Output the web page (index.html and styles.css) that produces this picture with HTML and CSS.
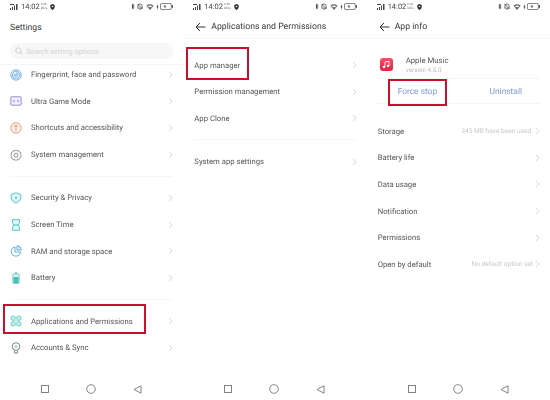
FILE: index.html
```html
<!DOCTYPE html>
<html lang="en">
<head>
<meta charset="utf-8">
<title>Settings</title>
<link rel="stylesheet" href="styles.css">
</head>
<body>
<svg class="defs" width="0" height="0" aria-hidden="true">
  <symbol id="chev" viewBox="0 0 5 8"><path d="M1 1l3 3-3 3" fill="none" stroke="#d0d0d0" stroke-width=".8"/></symbol>
  <symbol id="back" viewBox="0 0 11 10"><path d="M10.500 5H1M5 1L1 5l4 4" fill="none" stroke="#333" stroke-width="1"/></symbol>
  <symbol id="square" viewBox="0 0 8 8"><rect x=".5" y=".5" width="7" height="7" fill="none" stroke="#777" stroke-width=".9"/></symbol>
  <symbol id="circle" viewBox="0 0 10 10"><circle cx="5" cy="5" r="4.300" fill="none" stroke="#777" stroke-width=".9"/></symbol>
  <symbol id="tri" viewBox="0 0 9 9"><path d="M8 .8v7.400L1 4.500z" fill="none" stroke="#777" stroke-width=".9"/></symbol>
  <symbol id="signal" viewBox="0 0 8 7"><path d="M0 5h1v2H0zM2 4h1v3H2zM4 2.500h1V7H4zM6 1h1.500v6H6zM0 1h4v1H0z" fill="#444"/></symbol>
  <symbol id="shield" viewBox="0 0 6 7"><path d="M.3 1L3 0l2.700 1v2.500Q5.500 6 3 7 .5 6 .3 3.500z" fill="#333"/><circle cx="3" cy="3" r=".9" fill="#fff"/></symbol>
  <symbol id="bt" viewBox="0 0 5 8"><path d="M1 2l2.800 3.500L2.200 7V1l1.600 1.500L1 6" fill="none" stroke="#333" stroke-width=".9"/></symbol>
  <symbol id="mute" viewBox="0 0 7 8"><path d="M1 6V3.500Q1 1 3.500 1T6 3.500V6zM.5 1l6 6" fill="none" stroke="#444" stroke-width=".9"/><path d="M3 7h1v1H3z" fill="#444"/></symbol>
  <symbol id="wifi" viewBox="0 0 9 7"><path d="M.3 2Q4.500-1.300 8.700 2L4.500 7z" fill="#666"/><path d="M2 2.600Q4.500 1 7 2.600L6 3.800Q4.500 3 3 3.800z" fill="#fff"/></symbol>
  <symbol id="bolt" viewBox="0 0 3 7"><path d="M2 0L.3 3.800h1L1 7l1.700-4h-1z" fill="#333"/></symbol>
  <symbol id="battery" viewBox="0 0 13 7"><rect x=".4" y=".4" width="11" height="6.200" rx="1.500" fill="none" stroke="#444" stroke-width=".7"/><path d="M12 2.300h1v2.400h-1z" fill="#444"/><path d="M5 5V2L3.800 3.800h2.400" fill="none" stroke="#444" stroke-width=".6"/></symbol>
</svg>

<main class="screens">

  <section class="phone">
    <div class="status">
      <svg class="st-signal"><use href="#signal"/></svg><span class="st-time">14:02</span><span class="st-speed">0.28<br>KB/s</span><svg class="st-shield"><use href="#shield"/></svg>
      <span class="st-right"><svg class="st-bt"><use href="#bt"/></svg><svg class="st-mute"><use href="#mute"/></svg><svg class="st-wifi"><use href="#wifi"/></svg><svg class="st-bolt"><use href="#bolt"/></svg><svg class="st-batt"><use href="#battery"/></svg></span>
    </div>
    <header class="head head-main"><h1 class="title">Settings</h1></header>
    <div class="search-wrap">
      <div class="search">
        <svg class="search-icon" viewBox="0 0 8 8"><circle cx="3.500" cy="3.500" r="2.700" fill="none" stroke="#c4c4c4" stroke-width=".8"/><path d="M5.500 5.500L7.500 7.500" stroke="#c4c4c4" stroke-width=".8"/></svg>
        <span>Search setting options</span>
      </div>
    </div>
    <div class="list list-main">
      <a class="row"><svg class="ico" viewBox="0 0 12 12"><g fill="none" stroke="#4f9de0" stroke-width=".8"><circle cx="6" cy="6" r="5.200"/><circle cx="6" cy="6" r="3.600"/><path d="M6 3.800Q8 4 8 6.500M4 6q0-1 2-.8 1 .2 1 2.800M5.500 8V6.500M4 7.500L4.300 6"/></g></svg><span class="label">Fingerprint, face and password</span><svg class="chev"><use href="#chev"/></svg></a>
      <a class="row"><svg class="ico" viewBox="0 0 12 12"><rect x=".8" y="1.800" width="10.400" height="8.400" rx="1" fill="#f1effc" stroke="#8580dc" stroke-width=".9"/><path d="M3 6h2M4 5v2M7 6h2M8 5v2" stroke="#7a74d6" stroke-width=".6"/></svg><span class="label">Ultra Game Mode</span><svg class="chev"><use href="#chev"/></svg></a>
      <a class="row"><svg class="ico" viewBox="0 0 12 12"><circle cx="6" cy="6" r="5.200" fill="#fdf1ec" stroke="#ee9070" stroke-width=".9"/><path d="M6 9V3.500M4 5l2-2 2 2" fill="none" stroke="#ee9070" stroke-width=".9"/></svg><span class="label">Shortcuts and accessibility</span><svg class="chev"><use href="#chev"/></svg></a>
      <a class="row"><svg class="ico" viewBox="0 0 12 12"><path d="M6 .8l1.200 1 1.600-.2.600 1.500 1.400.7-.3 1.500.7 1L11 7.100l-.3 1.500-1.400.7-.6 1.500-1.600-.2L6 11.600l-1.200-1-1.600.2-.6-1.500-1.400-.7L1.500 7.100.8 6.300l.7-1L1.200 3.800l1.400-.7.600-1.500 1.600.2z" fill="none" stroke="#777" stroke-width=".8"/><circle cx="6" cy="6.200" r="2" fill="none" stroke="#777" stroke-width=".8"/></svg><span class="label">System management</span><svg class="chev"><use href="#chev"/></svg></a>
      <hr class="rule">
      <a class="row"><svg class="ico" viewBox="0 0 12 12"><path d="M6 .8l4.800 1.700v3.500Q10.300 9.500 6 11.200 1.700 9.500 1.200 6V2.500z" fill="#dff5f6" stroke="#45c0c8" stroke-width=".9"/><circle cx="6" cy="5.800" r="1" fill="#45c0c8"/></svg><span class="label">Security &amp; Privacy</span><svg class="chev"><use href="#chev"/></svg></a>
      <a class="row"><svg class="ico" viewBox="0 0 12 12"><path d="M2.500 .7h7v3L7.800 6l1.700 2.300v3h-7v-3L4.200 6 2.500 3.700z" fill="#dff5f6" stroke="#45c0c8" stroke-width=".9"/><path d="M3 6h6" stroke="#45c0c8" stroke-width=".9"/></svg><span class="label">Screen Time</span><svg class="chev"><use href="#chev"/></svg></a>
      <a class="row"><svg class="ico" viewBox="0 0 12 12"><path d="M5 2A4.600 4.600 0 1 0 10.500 7H5z" fill="none" stroke="#4fa8e0" stroke-width=".9"/><path d="M7 .7A4.500 4.500 0 0 1 11.300 5H7z" fill="#e3f2fc" stroke="#4fa8e0" stroke-width=".9"/></svg><span class="label">RAM and storage space</span><svg class="chev"><use href="#chev"/></svg></a>
      <a class="row"><svg class="ico" viewBox="0 0 12 12"><path d="M5 .5h2V2H5z" fill="#45c0b8"/><rect x="2.800" y="2" width="6.400" height="9.500" rx=".8" fill="#dff5f3" stroke="#45c0b8" stroke-width=".7"/><rect x="3.500" y="5" width="5" height="6" fill="#45c0b8"/></svg><span class="label">Battery</span><svg class="chev"><use href="#chev"/></svg></a>
      <hr class="rule">
      <a class="row"><svg class="ico" viewBox="0 0 12 12"><g fill="#c5eeea" stroke="#52c7bd" stroke-width=".8"><rect x="1" y="1" width="4.400" height="4.400" rx="2"/><rect x="6.600" y="1" width="4.400" height="4.400" rx="2"/><rect x="1" y="6.600" width="4.400" height="4.400" rx="2"/><rect x="6.600" y="6.600" width="4.400" height="4.400" rx="2"/></g><rect x="4.500" y="4.500" width="3" height="3" fill="#c5eeea"/></svg><span class="label">Applications and Permissions</span><svg class="chev"><use href="#chev"/></svg></a>
      <a class="row"><svg class="ico" viewBox="0 0 12 12"><circle cx="6" cy="4.500" r="3.800" fill="none" stroke="#777" stroke-width=".9"/><circle cx="6" cy="4.500" r="1.500" fill="#9fd8e0"/><path d="M4.500 8.500v2.500h3V8.500" fill="none" stroke="#777" stroke-width=".9"/></svg><span class="label">Accounts &amp; Sync</span><svg class="chev"><use href="#chev"/></svg></a>
    </div>
    <nav class="nav"><svg class="n-sq"><use href="#square"/></svg><svg class="n-ci"><use href="#circle"/></svg><svg class="n-tr"><use href="#tri"/></svg></nav>
    <div class="mark mark-apps"></div>
  </section>

  <section class="phone">
    <div class="status">
      <svg class="st-signal"><use href="#signal"/></svg><span class="st-time">14:02</span><span class="st-speed">0.28<br>KB/s</span><svg class="st-shield"><use href="#shield"/></svg>
      <span class="st-right"><svg class="st-bt"><use href="#bt"/></svg><svg class="st-mute"><use href="#mute"/></svg><svg class="st-wifi"><use href="#wifi"/></svg><svg class="st-bolt"><use href="#bolt"/></svg><svg class="st-batt"><use href="#battery"/></svg></span>
    </div>
    <header class="head"><svg class="back"><use href="#back"/></svg><h1 class="title">Applications and Permissions</h1></header>
    <div class="list list-sub">
      <a class="row"><span class="label">App manager</span><svg class="chev"><use href="#chev"/></svg></a>
      <a class="row"><span class="label">Permission management</span><svg class="chev"><use href="#chev"/></svg></a>
      <a class="row"><span class="label">App Clone</span><svg class="chev"><use href="#chev"/></svg></a>
      <hr class="rule">
      <a class="row"><span class="label">System app settings</span><svg class="chev"><use href="#chev"/></svg></a>
    </div>
    <nav class="nav"><svg class="n-sq"><use href="#square"/></svg><svg class="n-ci"><use href="#circle"/></svg><svg class="n-tr"><use href="#tri"/></svg></nav>
    <div class="mark mark-manager"></div>
  </section>

  <section class="phone">
    <div class="status">
      <svg class="st-signal"><use href="#signal"/></svg><span class="st-time">14:02</span><span class="st-speed">0.00<br>KB/s</span><svg class="st-shield"><use href="#shield"/></svg>
      <span class="st-right"><svg class="st-bt"><use href="#bt"/></svg><svg class="st-mute"><use href="#mute"/></svg><svg class="st-wifi"><use href="#wifi"/></svg><svg class="st-bolt"><use href="#bolt"/></svg><svg class="st-batt"><use href="#battery"/></svg></span>
    </div>
    <header class="head"><svg class="back"><use href="#back"/></svg><h1 class="title">App info</h1></header>
    <div class="app">
      <svg class="app-icon" viewBox="0 0 13 13"><defs><linearGradient id="pink" x1="0" y1="0" x2="0" y2="1"><stop offset="0" stop-color="#f8506a"/><stop offset="1" stop-color="#e8203f"/></linearGradient></defs><rect width="13" height="13" rx="3" fill="url(#pink)"/><path d="M5 9V4l4-.8v4.800" fill="none" stroke="#fff" stroke-width=".9"/><circle cx="4" cy="9" r="1.200" fill="#fff"/><circle cx="8" cy="8" r="1.200" fill="#fff"/></svg>
      <div class="app-text"><div class="app-name">Apple Music</div><div class="app-ver">version 4.5.0</div></div>
    </div>
    <div class="actions"><span class="act act-stop">Force stop</span><span class="act act-un">Uninstall</span></div>
    <div class="list list-info">
      <a class="row"><span class="label">Storage</span><span class="value">345 MB have been used.</span><svg class="chev"><use href="#chev"/></svg></a>
      <a class="row"><span class="label">Battery life</span><svg class="chev"><use href="#chev"/></svg></a>
      <a class="row"><span class="label">Data usage</span><svg class="chev"><use href="#chev"/></svg></a>
      <a class="row"><span class="label">Notification</span><svg class="chev"><use href="#chev"/></svg></a>
      <a class="row"><span class="label">Permissions</span><svg class="chev"><use href="#chev"/></svg></a>
      <a class="row"><span class="label">Open by default</span><span class="value">No default option set</span><svg class="chev"><use href="#chev"/></svg></a>
    </div>
    <nav class="nav"><svg class="n-sq"><use href="#square"/></svg><svg class="n-ci"><use href="#circle"/></svg><svg class="n-tr"><use href="#tri"/></svg></nav>
    <div class="mark mark-stop"></div>
  </section>

</main>
</body>
</html>
```

FILE: styles.css
```css
* { box-sizing: border-box; }
html, body { margin: 0; padding: 0; background: #fff; }
body { width: 550px; height: 400px; overflow: hidden; font-family: Roboto, "Liberation Sans", sans-serif; color: #555; text-rendering: geometricPrecision; }
.defs { position: absolute; }
.screens { display: flex; width: 550px; height: 400px; }
.phone { position: relative; flex: 0 0 183.33px; height: 400px; display: flex; flex-direction: column; overflow: hidden; filter: blur(.35px); }

.status { position: relative; z-index: 1; flex: 0 0 13px; height: 13px; display: flex; align-items: center; padding: 0 10px; background: #fff; }
.status svg { display: block; }
.st-signal { width: 8px; height: 7px; }
.st-time { margin-left: 3px; font-size: 7.5px; color: #444; }
.st-speed { margin-left: 1px; font-size: 3px; line-height: 3.2px; color: #666; }
.st-shield { width: 5px; height: 6px; margin-left: 3px; }
.st-right { margin-left: auto; display: flex; align-items: center; }
.st-bt { width: 4px; height: 7px; }
.st-mute { width: 6px; height: 7px; margin-left: 2px; }
.st-wifi { width: 8px; height: 6px; margin-left: 3px; }
.st-bolt { width: 3px; height: 6px; margin-left: 2px; }
.st-batt { width: 13px; height: 7px; margin-left: 1px; }

.head { position: relative; z-index: 1; flex: 0 0 26px; height: 26px; display: flex; align-items: center; padding: 2px 0 0 11px; border-bottom: 1px solid #f5f5f5; background: #fff; }
.head-main { flex-basis: 28px; height: 28px; border-bottom: 0; padding: 1px 0 0 10px; }
.title { margin: 0; font-size: 8.7px; font-weight: 400; color: #3a3a3a; }
.back { width: 11px; height: 10px; margin: 0 5px 0 1px; display: block; }

.search-wrap { position: relative; z-index: 1; flex: 0 0 23px; padding: 2px 10px 5px; border-bottom: 1px solid #f5f5f5; background: #fff; }
.search { height: 16px; border-radius: 8px; background: #f7f7f7; display: flex; align-items: center; padding-left: 5px; font-size: 7.3px; color: #d4d4d4; }
.search-icon { width: 8px; height: 8px; margin-right: 3px; }

.list { display: flex; flex-direction: column; }
.list-main { margin-top: -3.7px; }
.list-sub { padding-top: 12.8px; }
.list-info { padding-top: 13.8px; }
.list-sub .row, .list-info .row { padding-left: 11px; }

.row { flex: 0 0 26.67px; height: 26.67px; display: flex; align-items: center; padding: 0 10px; font-size: 7.7px; color: #555; }
.ico { width: 12px; height: 12px; flex: none; margin-right: 9px; }
.label { white-space: nowrap; }
.value { margin-left: auto; font-size: 6.6px; color: #c8c8c8; white-space: nowrap; }
.chev { width: 5px; height: 8px; flex: none; margin-left: auto; }
.value + .chev { margin-left: 2px; }
.rule { flex: none; height: 1px; margin: 7.67px 10px 8px; border: 0; background: #f6f6f6; width: 163px; }

.app { flex: 0 0 39px; height: 39px; display: flex; align-items: center; padding: 12px 0 0 13px; }
.app-icon { width: 13px; height: 13px; margin: 0 13px 0 0; flex: none; }
.app-name { font-size: 7.8px; line-height: 10px; color: #555; }
.app-ver { font-size: 6.3px; line-height: 8px; color: #bbb; }
.actions { flex: 0 0 26px; height: 26px; margin: 0 10px; padding-top: 2px; display: flex; align-items: center; border-top: 1px solid #f5f5f5; border-bottom: 1px solid #f5f5f5; font-size: 8.4px; color: #7d98d4; }
.act-stop { margin-left: 21px; }
.act-un { margin-left: auto; margin-right: 18px; }

.nav { position: absolute; left: 0; right: 0; bottom: 6px; height: 10px; display: flex; align-items: center; justify-content: center; gap: 37px; }
.n-sq { width: 8px; height: 8px; }
.n-ci { width: 10px; height: 10px; }
.n-tr { width: 9px; height: 9px; }

.mark { position: absolute; border: 2px solid #c8102e; }
.mark-apps { left: 3px; top: 304px; width: 143px; height: 30px; }
.mark-manager { left: 3px; top: 47px; width: 63px; height: 33px; }
.mark-stop { left: 21px; top: 79px; width: 59px; height: 27px; }
```
